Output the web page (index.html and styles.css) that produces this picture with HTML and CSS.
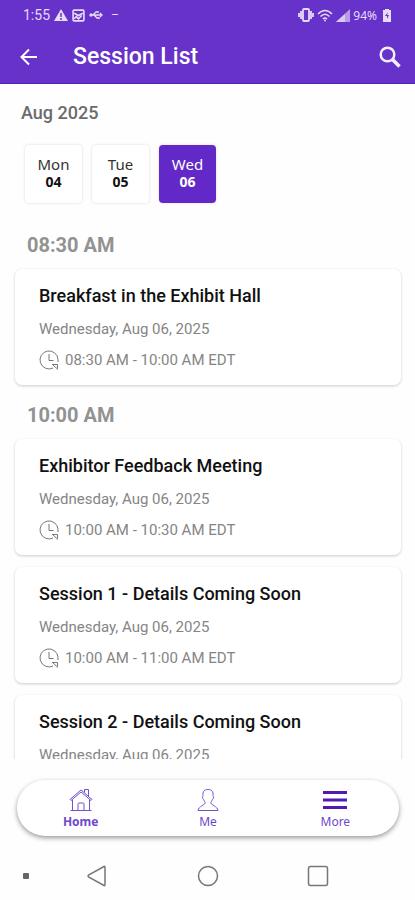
FILE: index.html
```html
<!DOCTYPE html>
<html lang="en">
<head>
    <meta charset="UTF-8">
    <meta name="viewport" content="width=device-width, initial-scale=1">
    <title>Session List</title>
    <link rel="stylesheet" href="styles.css">
</head>
<body>
    <svg class="sprite" aria-hidden="true">
        <symbol id="clock" viewBox="0 0 20 20">
            <path d="M14 18A9 9 0 1 1 19 9.500V12M10 4v6.500h4.500M13 14.500h5.500v4M14 15l5 4.500"/>
        </symbol>
    </svg>
    <header class="header">
        <div class="status">
            <span>1:55</span>
            <svg width="14" height="14" viewBox="0 0 14 14"><path d="M7 1l7 12H0z" fill="#e6dbf8"/><path d="M7 5v4M7 10v2" stroke="#6732ca" stroke-width="1.500"/></svg>
            <svg width="13" height="13" viewBox="0 0 12 12" fill="none" stroke="#e6dbf8" stroke-width="1.500"><rect x="1" y="1" width="10" height="10" rx="1"/><path d="M2 4l4 2 4-2M2 9l2-2 2 2 3-3"/></svg>
            <svg width="14" height="12" viewBox="0 0 14 12" fill="none" stroke="#e6dbf8" stroke-width="1.300"><path d="M2 6h11M4 6l3-3h2M5 6l3 3h2"/><circle cx="2" cy="6" r="1" fill="#e6dbf8"/><path d="M9 2v2M10 8v2M11 4l2 2-2 2"/></svg>
            <span class="dash">–</span>
            <div class="status-right">
                <svg width="16" height="14" viewBox="0 0 16 14" fill="none" stroke="#e6dbf8" stroke-width="1.800"><rect x="5" y="1" width="6" height="12" rx="1"/><path d="M3 3v8M13 3v8M1 5v4M15 5v4"/></svg>
                <svg width="16" height="13" viewBox="0 0 16 13" fill="none" stroke="#e6dbf8" stroke-width="1.500"><path d="M1 5q7-7 14 0M3.500 7.500q4.500-4.500 9 0M6 10q2-2 4 0"/><circle cx="8" cy="11.500" r="1" fill="#e6dbf8" stroke="none"/></svg>
                <svg width="14" height="13" viewBox="0 0 14 13"><path d="M14 0v13H0z" fill="#b79be5"/><path d="M9 5v8H0z" fill="#d9caf3"/></svg>
                <span class="battery-text">94%</span>
                <svg width="8" height="13" viewBox="0 0 8 13"><path d="M2 0h4v1h2v12H0V1h2z" fill="#e6dbf8"/><path d="M5 3L2 7h2v3l2-4H4z" fill="#6732ca"/></svg>
            </div>
        </div>
        <div class="toolbar">
            <button class="icon-button" aria-label="Back">
                <svg width="18" height="18" viewBox="0 0 18 18" fill="none" stroke="#fff" stroke-width="2"><path d="M17 9H2M9 1.500L1.500 9 9 16.500"/></svg>
            </button>
            <h1>Session List</h1>
            <button class="icon-button" aria-label="Search">
                <svg width="22" height="22" viewBox="0 0 22 22" fill="none" stroke="#f4eefc"><circle cx="8.500" cy="8.500" r="6.800" stroke-width="2.500"/><path d="M13.500 13.500l7 7" stroke-width="3.500"/></svg>
            </button>
        </div>
    </header>
    <main class="content">
        <h2 class="month">Aug 2025</h2>
        <div class="days">
            <button class="day">Mon<b>04</b></button>
            <button class="day">Tue<b>05</b></button>
            <button class="day selected">Wed<b>06</b></button>
        </div>
        <h3 class="time">08:30 AM</h3>
        <article class="card">
            <h4>Breakfast in the Exhibit Hall</h4>
            <p>Wednesday, Aug 06, 2025</p>
            <p class="hours"><svg class="clock"><use href="#clock"/></svg>08:30 AM - 10:00 AM EDT</p>
        </article>
        <h3 class="time">10:00 AM</h3>
        <article class="card">
            <h4>Exhibitor Feedback Meeting</h4>
            <p>Wednesday, Aug 06, 2025</p>
            <p class="hours"><svg class="clock"><use href="#clock"/></svg>10:00 AM - 10:30 AM EDT</p>
        </article>
        <article class="card">
            <h4>Session 1 - Details Coming Soon</h4>
            <p>Wednesday, Aug 06, 2025</p>
            <p class="hours"><svg class="clock"><use href="#clock"/></svg>10:00 AM - 11:00 AM EDT</p>
        </article>
        <article class="card">
            <h4>Session 2 - Details Coming Soon</h4>
            <p>Wednesday, Aug 06, 2025</p>
        </article>
    </main>
    <nav class="tabs">
        <a class="tab active" href="#home">
            <svg width="24" height="24" viewBox="0 0 24 24" fill="none" stroke="#7650d2"><path d="M1.500 22.500h21M3.500 22V11.500M20.500 22V11.500M1 11.500L12 2l11 9.500-1 1L12 4 2 12.500zM15.500 4.500v-3h4v7M9 22v-6q0-1 1-1h4q1 0 1 1v6"/></svg>
            Home
        </a>
        <a class="tab" href="#me">
            <svg width="24" height="24" viewBox="0 0 24 24" fill="none" stroke="#7650d2"><path d="M12 1.500c-4 0-5.500 2.500-5 6 0 1-1 1-.500 2.500.500 1 1 1 1.500 2.500.500 1.500 1.500 1.500 1 3-.500 1.500-6 2.500-7 7h20c-1-4.500-6.500-5.500-7-7-.500-1.500.500-1.500 1-3 .500-1.500 1-1.500 1.500-2.500.500-1.500-.500-1.500-.500-2.500.500-3.500-1-6-5-6z"/></svg>
            Me
        </a>
        <a class="tab" href="#more">
            <svg width="24" height="24" viewBox="0 0 24 24" stroke="#5219b5" stroke-width="3"><path d="M0 4.500h24M0 12h24M0 19.500h24"/></svg>
            More
        </a>
    </nav>
    <footer class="system">
        <span class="dot"></span>
        <button aria-label="System back"><svg width="22" height="22" viewBox="0 0 22 22"><path d="M18 1.500q1-.5 1 1v17q0 1.500-1 1L2.500 12q-1-1 0-2z"/></svg></button>
        <button aria-label="System home"><svg width="22" height="22" viewBox="0 0 22 22"><circle cx="11" cy="11" r="9.500"/></svg></button>
        <button aria-label="Recent apps"><svg width="22" height="22" viewBox="0 0 22 22"><rect x="1.500" y="1.500" width="19" height="19" rx="2"/></svg></button>
    </footer>
</body>
</html>
```

FILE: styles.css
```css
* {
    box-sizing: border-box;
}
body {
    display: flex;
    flex-direction: column;
    height: 100vh;
    margin: 0;
    background: #fefefe;
    font-family: Roboto, "Noto Sans", sans-serif;
}
h1, h2, h3, h4, p {
    margin: 0;
}
button {
    padding: 0;
    border: 0;
    background: none;
    font: inherit;
}
svg {
    flex: none;
}
.sprite {
    position: absolute;
    width: 0;
    height: 0;
}
.header {
    flex: none;
    padding: 4px 14px 4px 20px;
    border-bottom: 1px solid #5520b5;
    background: #6732ca;
    color: #fff;
}
.status {
    display: flex;
    align-items: center;
    gap: 4px;
    height: 22px;
    padding: 0 24px 0 3px;
    margin-right: -14px;
    color: #e6dbf8;
    font-size: 14px;
}
.dash {
    padding-left: 4px;
    font-size: 12px;
}
.status-right {
    display: flex;
    align-items: center;
    gap: 3px;
    margin-left: auto;
}
.battery-text {
    padding-right: 3px;
    font: 12px "Noto Sans", sans-serif;
}
.toolbar {
    display: flex;
    align-items: center;
    height: 53px;
    padding-top: 8px;
}
.toolbar h1 {
    flex: 1;
    padding-left: 35px;
    font-size: 23px;
    font-weight: 500;
}
.icon-button {
    display: flex;
}
.content {
    flex: 1;
    min-height: 0;
    padding: 17px 14px 0 15px;
    overflow: hidden;
}
.month {
    padding-left: 6px;
    color: #6b6b6b;
    font-size: 18px;
    font-weight: 500;
    line-height: 24px;
}
.days {
    display: flex;
    gap: 10px;
    margin: 20px 0 30px;
    padding-left: 10px;
}
.day {
    width: 57px;
    height: 58px;
    padding-bottom: 2px;
    border-radius: 4px;
    background: #fff;
    box-shadow: 0 0 3px rgba(0, 0, 0, 0.15);
    color: #333;
    font: 15px/17px "Noto Sans", sans-serif;
}
.day b {
    display: block;
    color: #111;
    font-size: 14px;
}
.day.selected {
    background: #6229c8;
    color: #fff;
}
.day.selected b {
    color: #fff;
}
.time {
    margin: 18px 0 12px;
    padding-left: 12px;
    color: #929292;
    font-size: 20px;
    font-weight: 700;
    line-height: 24px;
}
.card {
    margin-bottom: 12px;
    padding: 15px 24px;
    border-radius: 7px;
    background: #fff;
    box-shadow: 0 1px 3px rgba(0, 0, 0, 0.2);
}
.card h4 {
    color: #111;
    font-size: 18px;
    font-weight: 500;
    line-height: 24px;
}
.card p {
    margin-top: 11px;
    color: #858585;
    font-size: 15px;
    line-height: 20px;
}
.card .hours {
    display: flex;
    align-items: center;
    gap: 6px;
}
.clock {
    width: 20px;
    height: 20px;
    fill: none;
    stroke: #777;
}
.tabs {
    display: flex;
    flex: none;
    margin: 21px 16px 0 17px;
    height: 56px;
    padding: 8px 0 0;
    border-radius: 28px;
    background: #fff;
    box-shadow: 0 2px 5px rgba(0, 0, 0, 0.4);
}
.tab {
    display: flex;
    flex: 1;
    flex-direction: column;
    align-items: center;
    color: #6d48cd;
    font: 12px/20px "Noto Sans", sans-serif;
    text-decoration: none;
}
.tab.active {
    font-weight: 700;
}
.system {
    display: flex;
    flex: none;
    align-items: center;
    height: 64px;
    padding: 16px 86px 0 23px;
}
.system button {
    display: flex;
}
.system button + button {
    margin-left: auto;
}
.system svg {
    fill: none;
    stroke: #777;
    stroke-width: 1.5;
}
.dot {
    width: 6px;
    height: 6px;
    margin-right: 57px;
    border-radius: 1px;
    background: #666;
}
```
